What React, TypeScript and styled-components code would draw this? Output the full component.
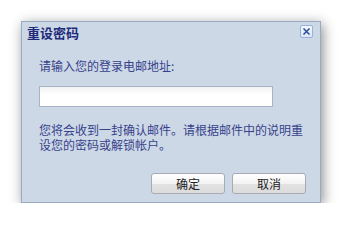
import React from 'react';
import styled, { createGlobalStyle } from 'styled-components';

const GlobalStyle = createGlobalStyle`
  html, body {
    margin: 0;
    padding: 0;
    background: #ffffff;
  }
  body {
    font-family: "Noto Sans CJK SC", "Liberation Sans", sans-serif;
  }
`;

const Dialog = styled.div`
  margin: 21px 0 0 21px;
  width: 300px;
  height: 182px;
  box-sizing: border-box;
  border: 1px solid #98aac4;
  background: #cdd8e7;
  box-shadow: 2px 3px 12px rgba(0, 0, 0, 0.45);
  display: flex;
  flex-direction: column;
`;

const Header = styled.div`
  display: flex;
  align-items: center;
  justify-content: space-between;
  height: 22px;
  padding: 0 7px 0 5px;
`;

const Title = styled.div`
  font-size: 13px;
  font-weight: bold;
  color: #1e2a7a;
  line-height: 22px;
`;

const CloseButton = styled.button`
  width: 13px;
  height: 13px;
  padding: 0;
  margin-top: -3px;
  border: 1px solid #94b2dc;
  border-radius: 2px;
  background: linear-gradient(#f4f8fe, #dde7f6);
  display: flex;
  align-items: center;
  justify-content: center;
`;

const Body = styled.div`
  flex: 1;
  display: flex;
  flex-direction: column;
  padding: 0 14px 8px 17px;
`;

const Label = styled.div`
  margin-top: 14px;
  font-size: 12px;
  line-height: 16px;
  color: #37428a;
`;

const Input = styled.input`
  margin-top: 12px;
  width: 234px;
  height: 21px;
  box-sizing: border-box;
  border: 1px solid #a9b3c6;
  background: linear-gradient(#f2f2f2, #ffffff 40%);
  outline: none;
`;

const Note = styled.div`
  margin-top: 15px;
  width: 266px;
  font-size: 12px;
  line-height: 15px;
  color: #37428a;
`;

const Actions = styled.div`
  margin-top: auto;
  display: flex;
  justify-content: flex-end;
  gap: 7px;
`;

const Button = styled.button`
  width: 74px;
  height: 21px;
  padding: 0;
  box-sizing: border-box;
  border: 1px solid #a7acb4;
  border-radius: 3px;
  background: linear-gradient(#ffffff 0%, #f3f3f3 50%, #e2e2e2 51%, #dcdcdc 100%);
  font-family: "Noto Sans CJK SC", "Liberation Sans", sans-serif;
  font-size: 12px;
  color: #222222;
`;

const App: React.FC = () => (
  <>
    <GlobalStyle />
    <Dialog>
      <Header>
        <Title>重设密码</Title>
        <CloseButton aria-label="关闭">
          <svg width="9" height="9" viewBox="0 0 9 9">
            <path d="M1.5 1.5 L7.5 7.5 M7.5 1.5 L1.5 7.5" stroke="#2a4a9c" strokeWidth="1.5" />
          </svg>
        </CloseButton>
      </Header>
      <Body>
        <Label>请输入您的登录电邮地址:</Label>
        <Input type="text" />
        <Note>您将会收到一封确认邮件。请根据邮件中的说明重设您的密码或解锁帐户。</Note>
        <Actions>
          <Button>确定</Button>
          <Button>取消</Button>
        </Actions>
      </Body>
    </Dialog>
  </>
);

export default App;
